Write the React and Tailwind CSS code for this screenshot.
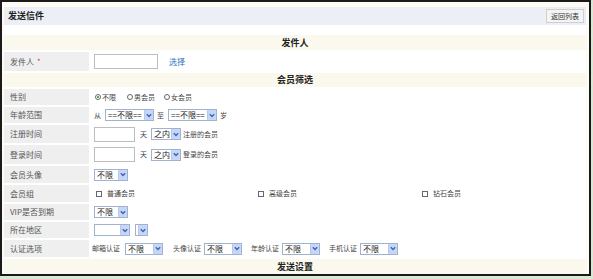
import React from "react";

const F = { fontFamily: '"Noto Sans CJK SC", "Noto Sans", sans-serif' };

function Sel({ w, text = "" }) {
  return (
    <div
      className="h-[12px] border border-[#9fb2cf] bg-white flex items-center justify-between shrink-0"
      style={{ width: w }}
    >
      <span className="pl-[2px] text-[8px] leading-none text-[#222] whitespace-nowrap">{text}</span>
      <div className="w-[9px] h-[10px] bg-[#c6d6f6] border-l border-[#b5c7ea] rounded-[1px] flex items-center justify-center">
        <svg width="6" height="5" viewBox="0 0 6 5">
          <path d="M0.8 1.2 L3 3.4 L5.2 1.2" stroke="#3d62b3" strokeWidth="1.4" fill="none" />
        </svg>
      </div>
    </div>
  );
}

function Row({ label, h, children, req }) {
  return (
    <div className="flex shrink-0" style={{ height: h }}>
      <div className="w-[85px] bg-[#efefef] flex items-center pl-[6px] text-[8px] text-[#555] whitespace-nowrap">
        {label}
        {req && <span className="text-[#e04040] ml-[3px]">*</span>}
      </div>
      <div className="flex-1 flex items-center pl-[5px] text-[7px] text-[#444] whitespace-nowrap">{children}</div>
    </div>
  );
}

function Head({ title, h }) {
  return (
    <div
      className="bg-[#fbf9ee] flex items-center justify-center text-[9px] font-bold text-[#222] shrink-0"
      style={{ height: h }}
    >
      {title}
    </div>
  );
}

function Radio({ on, label, ml }) {
  return (
    <div className="flex items-center" style={{ marginLeft: ml }}>
      <div className="w-[6px] h-[6px] rounded-full border border-[#667] flex items-center justify-center bg-white">
        {on && <div className="w-[2px] h-[2px] rounded-full bg-[#2a8a2a]" />}
      </div>
      <span className="ml-[1px] text-[7px]">{label}</span>
    </div>
  );
}

function Check({ label, ml }) {
  return (
    <div className="flex items-center" style={{ marginLeft: ml }}>
      <div className="w-[6px] h-[6px] border border-[#667] bg-white" />
      <span className="ml-[5px] text-[7px]">{label}</span>
    </div>
  );
}

export default function App() {
  return (
    <div className="w-[593px] h-[279px] bg-[#d6e9d3] overflow-hidden" style={F}>
      <div className="w-[591px] h-[276px] border-2 border-[#1a1a1a] bg-[#fdfbf3] flex flex-col pl-[2px] pr-[3px] pt-[5px]">
        <div className="bg-white flex flex-col gap-[2px] flex-1">
          <div className="h-[18px] bg-[#ecf0f6] flex items-center justify-between pl-[4px] pr-[2px] shrink-0">
            <span className="text-[9px] font-bold text-[#222]">发送信件</span>
            <div className="h-[14px] w-[38px] border border-[#cfcfcf] bg-[#f4f4f4] flex items-center justify-center text-[7px] text-[#333]">
              返回列表
            </div>
          </div>
          <div className="h-[6px] shrink-0" />
          <Head title="发件人" h={15} />
          <Row label="发件人" h={19} req>
            <div className="w-[64px] h-[15px] border border-[#bdbdbd] bg-white" />
            <span className="ml-[11px] text-[#2a6fc0] text-[8px]">选择</span>
          </Row>
          <Head title="会员筛选" h={14} />
          <Row label="性别" h={16}>
            <Radio on label="不限" ml={1} />
            <Radio label="男会员" ml={11} />
            <Radio label="女会员" ml={9} />
          </Row>
          <Row label="年龄范围" h={16}>
            <span className="text-[7px]">从</span>
            <div className="ml-[4px]"><Sel w={49} text="==不限==" /></div>
            <span className="ml-[3px]">至</span>
            <div className="ml-[4px]"><Sel w={49} text="==不限==" /></div>
            <span className="ml-[3px]">岁</span>
          </Row>
          <Row label="注册时间" h={18}>
            <div className="w-[41px] h-[15px] border border-[#bdbdbd] bg-white" />
            <span className="ml-[5px]">天</span>
            <div className="ml-[4px]"><Sel w={30} text="之内" /></div>
            <span className="ml-[2px]">注册的会员</span>
          </Row>
          <Row label="登录时间" h={19}>
            <div className="w-[41px] h-[15px] border border-[#bdbdbd] bg-white" />
            <span className="ml-[5px]">天</span>
            <div className="ml-[4px]"><Sel w={30} text="之内" /></div>
            <span className="ml-[2px]">登录的会员</span>
          </Row>
          <Row label="会员头像" h={17}>
            <Sel w={34} text="不限" />
          </Row>
          <Row label="会员组" h={17}>
            <Check label="普通会员" ml={2} />
            <div className="w-[123px]" />
            <Check label="高级会员" ml={0} />
            <div className="w-[125px]" />
            <Check label="钻石会员" ml={0} />
          </Row>
          <Row label="VIP是否到期" h={16}>
            <Sel w={34} text="不限" />
          </Row>
          <Row label="所在地区" h={16}>
            <Sel w={36} text="" />
            <div className="ml-[5px]"><Sel w={13} text="" /></div>
          </Row>
          <Row label="认证选项" h={17}>
            <span className="-ml-[2px]">邮箱认证</span>
            <div className="ml-[5px]"><Sel w={38} text="不限" /></div>
            <span className="ml-[10px]">头像认证</span>
            <div className="ml-[3px]"><Sel w={38} text="不限" /></div>
            <span className="ml-[9px]">年龄认证</span>
            <div className="ml-[3px]"><Sel w={38} text="不限" /></div>
            <span className="ml-[9px]">手机认证</span>
            <div className="ml-[3px]"><Sel w={38} text="不限" /></div>
          </Row>
          <div className="flex-1 bg-[#fbf9ee] flex items-center justify-center text-[9px] font-bold text-[#222]">
            发送设置
          </div>
        </div>
      </div>
    </div>
  );
}
